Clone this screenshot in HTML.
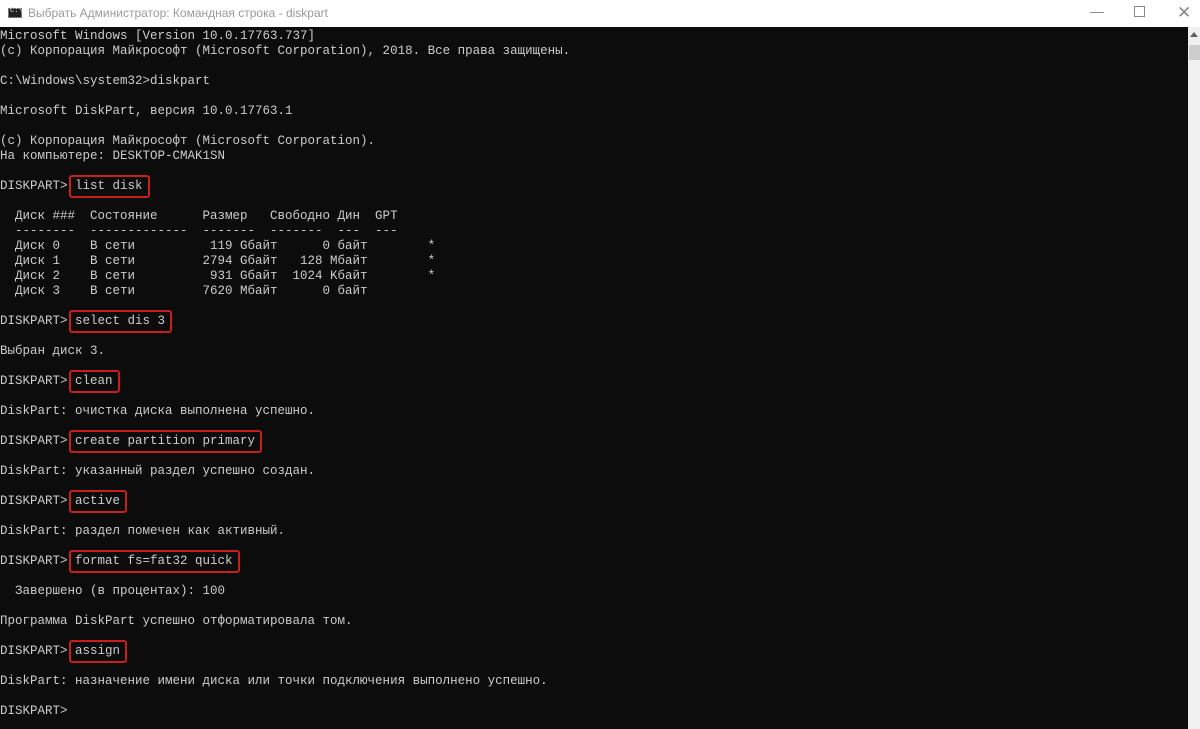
<!DOCTYPE html>
<html><head><meta charset="utf-8"><style>
html,body{margin:0;padding:0;width:1200px;height:729px;overflow:hidden;background:#0c0c0c}
#title{position:absolute;left:0;top:0;width:1200px;height:27px;background:#fff;font-family:"Liberation Sans",sans-serif;font-size:12px;color:#9a9a9a}
#title .t{position:absolute;left:28px;top:6px}
#title .ic{position:absolute;left:8px;top:8px;width:14px;height:10px;background:#222;border:1px solid #777;box-sizing:border-box}
#title .ic:after{content:"C:\\";position:absolute;left:1px;top:-2px;font-size:7px;color:#ddd;font-family:"Liberation Mono",monospace}
.btn{position:absolute;top:0;color:#888;font-size:14px}
#con{position:absolute;left:0;top:27px;width:1188px;height:702px;background:#0c0c0c}
pre{margin:0;padding-top:2px;font-family:"Liberation Mono","DejaVu Sans Mono",monospace;font-size:12.5px;line-height:15px;color:#cccccc}
.r{position:relative}
.r:after{content:"";position:absolute;left:-6px;right:-7px;top:-4px;bottom:-5px;border:2px solid #c81e1e;border-radius:3px}
#sb{position:absolute;left:1188px;top:27px;width:12px;height:702px;background:#f0f0f0}
#sb .th{position:absolute;left:1px;top:18px;width:11px;height:15px;background:#cdcdcd}
#sb .ar{position:absolute;left:2px;top:5px;width:0;height:0;border-left:4px solid transparent;border-right:4px solid transparent;border-bottom:5px solid #606060}
</style></head><body>
<div id="title"><div class="ic"></div><div class="t">Выбрать Администратор: Командная строка - diskpart</div>
<div class="btn" style="left:1090px;top:3px">&#8212;</div>
<div class="btn" style="left:1134px;top:6px;width:9px;height:9px;border:1px solid #888"></div>
<div class="btn" style="left:1177px;top:3px;font-size:17px">&#10005;</div>
</div>
<div id="con"><pre>Microsoft Windows [Version 10.0.17763.737]
(c) Корпорация Майкрософт (Microsoft Corporation), 2018. Все права защищены.

C:\Windows\system32&gt;diskpart

Microsoft DiskPart, версия 10.0.17763.1

(c) Корпорация Майкрософт (Microsoft Corporation).
На компьютере: DESKTOP-CMAK1SN

DISKPART&gt; <span class="r">list disk</span>

  Диск ###  Состояние      Размер   Свободно Дин  GPT
  --------  -------------  -------  -------  ---  ---
  Диск 0    В сети          119 Gбайт      0 байт        *
  Диск 1    В сети         2794 Gбайт   128 Mбайт        *
  Диск 2    В сети          931 Gбайт  1024 Kбайт        *
  Диск 3    В сети         7620 Mбайт      0 байт

DISKPART&gt; <span class="r">select dis 3</span>

Выбран диск 3.

DISKPART&gt; <span class="r">clean</span>

DiskPart: очистка диска выполнена успешно.

DISKPART&gt; <span class="r">create partition primary</span>

DiskPart: указанный раздел успешно создан.

DISKPART&gt; <span class="r">active</span>

DiskPart: раздел помечен как активный.

DISKPART&gt; <span class="r">format fs=fat32 quick</span>

  Завершено (в процентах): 100

Программа DiskPart успешно отформатировала том.

DISKPART&gt; <span class="r">assign</span>

DiskPart: назначение имени диска или точки подключения выполнено успешно.

DISKPART&gt;</pre></div>
<div id="sb"><div class="ar"></div><div class="th"></div></div>
</body></html>
